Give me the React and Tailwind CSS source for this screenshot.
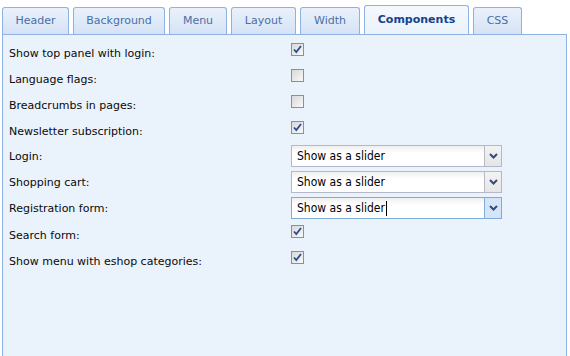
import React from 'react';

const tabs = [
    { label: 'Header', w: 'w-[67px]' },
    { label: 'Background', w: 'w-[92px]' },
    { label: 'Menu', w: 'w-[58px]' },
    { label: 'Layout', w: 'w-[65px]' },
    { label: 'Width', w: 'w-[60px]' },
    { label: 'Components', w: 'w-[105px]', active: true },
    { label: 'CSS', w: 'w-[49px]' },
];

const rows = [
    { label: 'Show top panel with login:', type: 'check', checked: true },
    { label: 'Language flags:', type: 'check', checked: false },
    { label: 'Breadcrumbs in pages:', type: 'check', checked: false },
    { label: 'Newsletter subscription:', type: 'check', checked: true },
    { label: 'Login:', type: 'select' },
    { label: 'Shopping cart:', type: 'select' },
    { label: 'Registration form:', type: 'select', focused: true },
    { label: 'Search form:', type: 'check', checked: true },
    { label: 'Show menu with eshop categories:', type: 'check', checked: true },
];

const Checkbox = ({ checked }) => (
    <span className="mt-[6px] flex h-[13px] w-[13px] items-center justify-center border border-[#8e8f8f] bg-gradient-to-br from-[#d8d8d8] to-[#f9f9f9]">
        {checked && (
            <svg width="9" height="9" viewBox="0 0 9 9">
                <path d="M1 4.5 L3.3 7 L8 1" fill="none" stroke="#2c4a8f" strokeWidth="1.8" />
            </svg>
        )}
    </span>
);

const Select = ({ focused }) => (
    <div
        className={`mt-[4px] flex h-[22px] w-[211px] border ${
            focused ? 'border-[#7eadd9]' : 'border-[#b5b8c8]'
        } bg-white`}
    >
        <div className="flex flex-1 items-center bg-gradient-to-b from-[#efefef] to-white to-[35%] pl-[5px] font-['DejaVu_Sans_Condensed','DejaVu_Sans',sans-serif] text-[12px] text-black">
            Show as a slider
            {focused && <span className="ml-[1px] h-[15px] w-px bg-black" />}
        </div>
        <div
            className={`flex w-[17px] items-center justify-center border-l ${
                focused ? 'border-[#7eadd9] bg-[#d5e5f7]' : 'border-[#b5b8c8] bg-gradient-to-b from-[#f3f3f3] to-[#e6e6e6]'
            }`}
        >
            <svg width="9" height="6" viewBox="0 0 9 6">
                <path d="M1 1 L4.5 4.5 L8 1" fill="none" stroke="#2f4b7f" strokeWidth="2" />
            </svg>
        </div>
    </div>
);

export default function App() {
    return (
        <div className="h-[356px] w-[570px] bg-white pt-[6px] font-['DejaVu_Sans',sans-serif] text-[11px] text-[#0a0a0a]">
            {/* tab strip */}
            <div className="ml-[2px] flex h-[28px] items-end gap-[4px]">
                {tabs.map((t) => (
                    <div
                        key={t.label}
                        className={`${t.w} flex items-center justify-center rounded-t-[3px] border border-b-0 border-[#8db2e3] ${
                            t.active
                                ? 'relative z-10 h-[29px] bg-gradient-to-b from-[#f5f9fe] to-[#eaf2fb] font-bold text-[#15428b]'
                                : 'h-[27px] bg-gradient-to-b from-[#eaf1fb] to-[#d5e3f6] text-[#4a6fa5]'
                        }`}
                    >
                        {t.label}
                    </div>
                ))}
            </div>

            {/* panel */}
            <div className="ml-[2px] h-[322px] w-[565px] border border-b-0 border-[#8db2e3] bg-[#eaf2fb] pl-[6px] pt-[2px]">
                {rows.map((r) => (
                    <div key={r.label} className="flex h-[26px] items-start">
                        <div className={`w-[282px] leading-[13px] ${r.type === 'select' ? 'pt-[9px]' : 'pt-[10px]'}`}>
                            {r.label}
                        </div>
                        {r.type === 'check' ? <Checkbox checked={r.checked} /> : <Select focused={r.focused} />}
                    </div>
                ))}
            </div>
        </div>
    );
}
